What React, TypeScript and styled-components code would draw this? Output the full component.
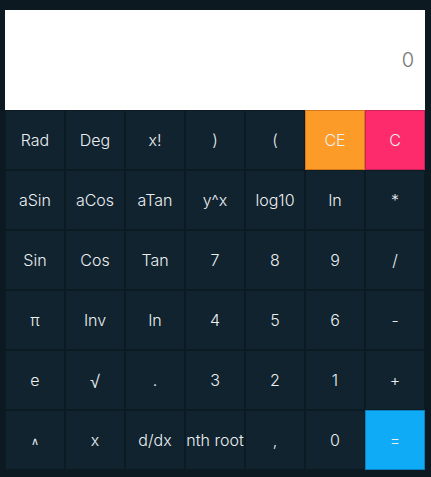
import React from "react";
import styled, { createGlobalStyle } from "styled-components";

const Global = createGlobalStyle`
  html, body { margin: 0; padding: 0; background: #0c1920; }
  body { font-family: Inter, "Noto Sans", sans-serif; }
`;

const Wrap = styled.div`
  padding: 10px 6px 7px 5px;
  width: 420px;
`;

const Display = styled.div`
  height: 100px;
  background: #ffffff;
  display: flex;
  align-items: center;
  justify-content: flex-end;
  padding-right: 11px;
  font-size: 20px;
  font-weight: 300;
  color: #757575;
`;

const Grid = styled.div`
  display: grid;
  grid-template-columns: repeat(7, 60px);
  grid-auto-rows: 60px;
`;

type Variant = "normal" | "orange" | "pink" | "blue";

const colors: Record<Variant, [string, string]> = {
  normal: ["#11232f", "#0c1a22"],
  orange: ["#fd9b28", "#d4791b"],
  pink: ["#fe2b6c", "#c9215a"],
  blue: ["#10abf6", "#0c7fbf"],
};

const Key = styled.button<{ $v: Variant }>`
  box-sizing: border-box;
  margin: 0;
  padding: 0;
  border: 1px solid ${(p) => colors[p.$v][1]};
  background: ${(p) => colors[p.$v][0]};
  color: #eaeff2;
  font-family: Inter, "Noto Sans", sans-serif;
  font-weight: 300;
  font-size: 16px;
  display: flex;
  align-items: center;
  justify-content: center;
  white-space: nowrap;
  cursor: pointer;
`;

const Small = styled.span`
  font-size: 11px;
  padding-top: 2px;
`;

const Root = styled.span`
  font-family: "Noto Sans", sans-serif;
  font-weight: 300;
  font-size: 18px;
  padding-top: 1px;
`;

const keys: [React.ReactNode, Variant][] = [
  ["Rad", "normal"], ["Deg", "normal"], ["x!", "normal"], [")", "normal"], ["(", "normal"], ["CE", "orange"], ["C", "pink"],
  ["aSin", "normal"], ["aCos", "normal"], ["aTan", "normal"], ["y^x", "normal"], ["log10", "normal"], ["ln", "normal"], ["*", "normal"],
  ["Sin", "normal"], ["Cos", "normal"], ["Tan", "normal"], ["7", "normal"], ["8", "normal"], ["9", "normal"], ["/", "normal"],
  ["π", "normal"], ["Inv", "normal"], ["ln", "normal"], ["4", "normal"], ["5", "normal"], ["6", "normal"], ["-", "normal"],
  ["e", "normal"], [<Root>√</Root>, "normal"], [".", "normal"], ["3", "normal"], ["2", "normal"], ["1", "normal"], ["+", "normal"],
  [<Small>∧</Small>, "normal"], ["x", "normal"], ["d/dx", "normal"], ["nth root", "normal"], [",", "normal"], ["0", "normal"], ["=", "blue"],
];

export default function App() {
  return (
    <>
      <Global />
      <Wrap>
        <Display>0</Display>
        <Grid>
          {keys.map(([label, v], i) => (
            <Key key={i} $v={v}>{label}</Key>
          ))}
        </Grid>
      </Wrap>
    </>
  );
}
